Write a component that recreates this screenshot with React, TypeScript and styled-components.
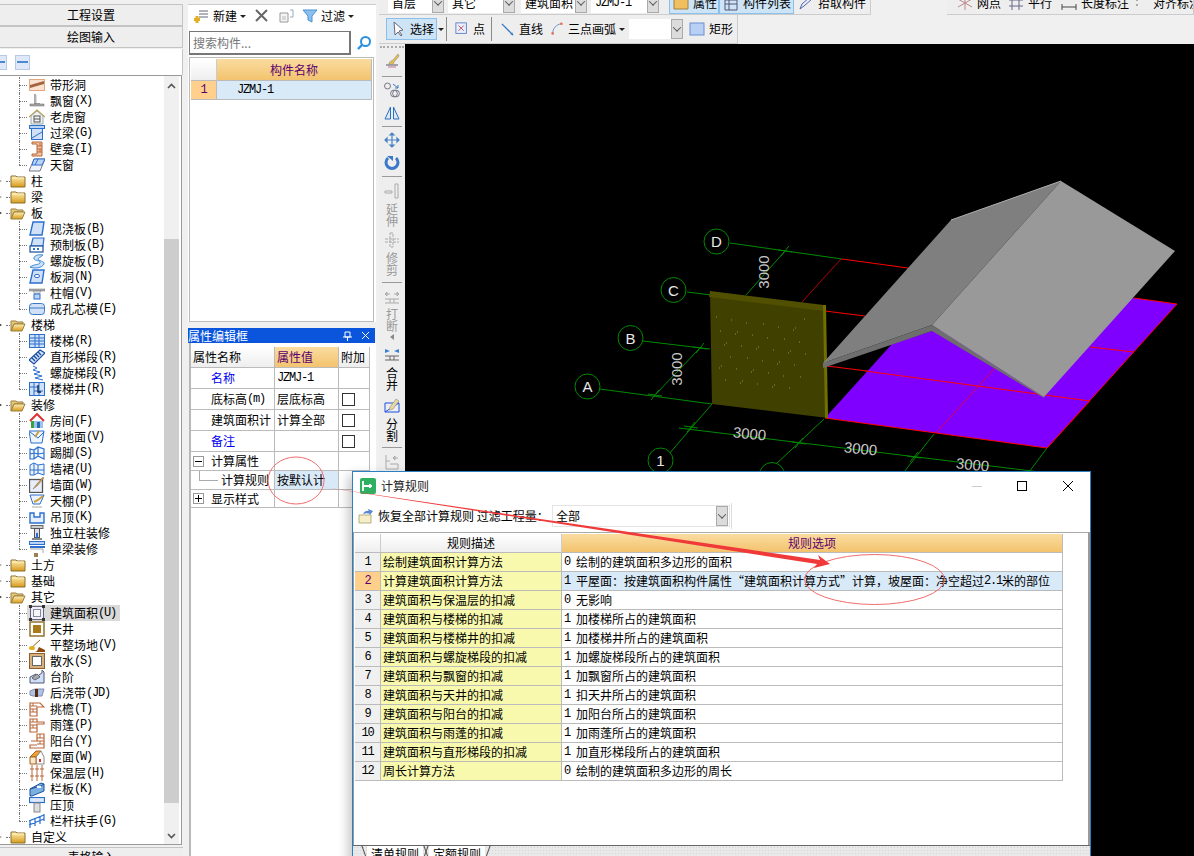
import React from 'react';
import styled, { createGlobalStyle } from 'styled-components';

const Global = createGlobalStyle`
  html, body { margin: 0; padding: 0; background: #f0f0f0; }
  body { font-family: "Noto Sans CJK SC", "Liberation Sans", sans-serif; font-size: 12px; color: #000; }
  * { box-sizing: border-box; }
`;

const Page = styled.div`
  position: relative; width: 1194px; height: 856px; overflow: hidden;
  display: flex; background: #f0f0f0; line-height: 14px;
`;
const Lat = styled.span`
  display: inline-block; line-height: 14px; height: 14px;
  font-family: "Liberation Mono", monospace; font-size: 12px; letter-spacing: -1.2px; white-space: pre;
`;
const Cjk = styled.span` display: inline-block; line-height: 14px; height: 14px; white-space: pre; `;
const T = ({ children }: { children: string }) => (
  <>
    {children.split(/([\x20-\x7e]+)/).filter(Boolean).map((p, i) =>
      /^[\x20-\x7e]+$/.test(p) ? <Lat key={i}>{p}</Lat> : <Cjk key={i}>{p}</Cjk>
    )}
  </>
);

/* ---------- left panel ---------- */
const Left = styled.aside`
  width: 183px; flex: none; display: flex; flex-direction: column; padding-top: 4px; height: 856px;
`;
const SideTab = styled.div<{ $gap?: number }>`
  height: 22px; flex: none; display: flex; align-items: center; justify-content: center;
  background: #eeeeee; border: 1px solid #c4c4c4; border-left: 0; margin-bottom: ${p => p.$gap ?? 0}px;
`;
const TreeTools = styled.div`
  height: 26px; flex: none; background: #fff; display: flex; align-items: center; gap: 8px;
  padding-left: 0; margin-left: -8px; border-right: 1px solid #c4c4c4;
`;
const MinusBtn = styled.span`
  width: 15px; height: 15px; background: #dfe8f8; border: 1px solid #b8c8e8; display: flex; align-items: center; justify-content: center;
  &::before { content: ""; width: 11px; height: 2px; background: #4a8ad0; }
`;
const TreeBox = styled.div`
  width: 182px; height: 770px; flex: none; background: #fff; border: 1px solid #999; border-left: 0;
  display: flex; position: relative;
`;
const TreeList = styled.div` flex: 1; padding-top: 1px; min-width: 0; overflow: hidden; `;
const Scroll = styled.div`
  width: 15px; margin: 0 2px 0 0; background: #f0f0f0; display: flex; flex-direction: column; align-items: center;
`;
const ScrollArrow = styled.div` height: 20px; display: flex; align-items: center; justify-content: center; flex: none; `;
const ScrollGap = styled.div<{ $h: number }>` height: ${p => p.$h}px; flex: none; `;
const Thumb = styled.div<{ $h: number }>` height: ${p => p.$h}px; width: 100%; background: #cdcdcd; flex: none; `;
const Row = styled.div` height: 16px; display: flex; align-items: center; white-space: nowrap; `;
const Exp = styled.span<{ $open: boolean }>`
  width: 10px; height: 16px; flex: none; position: relative;
  &::before { content: ""; position: absolute; left: -1px; top: 6px; width: 0; height: 0;
    border-left: 3px solid ${p => (p.$open ? '#444' : '#aaa')}; border-top: 2px solid transparent; border-bottom: 2px solid transparent; }
  &::after { content: ""; position: absolute; left: 6px; top: 8px; width: 4px; border-top: 1px dotted #777; }
`;
const Conn = styled.span<{ $last: boolean }>`
  width: 27px; height: 16px; flex: none; position: relative;
  &::before { content: ""; position: absolute; left: 19px; top: 0; height: ${p => (p.$last ? 8 : 16)}px; border-left: 1px dotted #777; }
  &::after { content: ""; position: absolute; left: 19px; top: 8px; width: 8px; border-top: 1px dotted #777; }
`;
const Item = styled.span<{ $sel?: boolean }>`
  display: inline-flex; align-items: center; height: 16px; gap: 5px; padding: 0 4px 0 2px;
  background: ${p => (p.$sel ? '#d9d9d9' : 'transparent')};
`;
const ItemLabel = styled.span` display: inline-flex; align-items: center; height: 14px; `;
const FolderItem = styled.span` display: inline-flex; align-items: center; height: 16px; gap: 5px; `;
const SideFoot = styled.div`
  height: 20px; margin-top: 2px; flex: none; text-align: center; background: #eee; border-top: 1px solid #c4c4c4; padding-top: 2px;
`;

const S = ({ children, s = 16 }: { children: React.ReactNode; s?: number }) => (
  <svg width={s} height={s} viewBox="0 0 16 16" fill="none" style={{ flex: 'none', display: 'block' }}>{children}</svg>
);
const B = '#2b6fd0', BL = '#cfe0f7', O = '#b9673a', OL = '#f2c6a4', G = '#777';

const Folder = ({ open }: { open: boolean }) => (
  <S>
    {open ? (
      <>
        <path d="M1 14V4h5l1 1h6v2H4L1 14z" fill="#e8c878" stroke="#9a8040" />
        <path d="M4 7h11l-3 7H1z" fill="url(#foldG)" stroke="#9a8040" />
      </>
    ) : (
      <>
        <path d="M1 3h5l1 1h8v10H1z" fill="url(#foldG)" stroke="#8a7030" />
        <path d="M2 5h12" stroke="#fff3c0" />
      </>
    )}
  </S>
);

const icons: Record<string, React.ReactNode> = {
  dai: <><rect x="0.5" y="2.5" width="15" height="11" fill="#f9e3d0" stroke="#e4a67e" /><path d="M1 8L15 4v3L1 11z" fill="#a5643d" /></>,
  piao: <><path d="M6 1v10h5" stroke="#555" /><path d="M7 2v8" stroke="#bbb" /><rect x="1" y="11" width="14" height="2" fill="#aaa" stroke="#666" strokeWidth=".5" /></>,
  laohu: <><path d="M0 8l8-7 8 7" stroke="#c8a040" strokeWidth="1.3" /><path d="M2 7l6-5 6 5v8H2z" fill="#f3f3f3" stroke="#9aa" /><rect x="5" y="7" width="6" height="6" stroke="#555" /><path d="M5 10h6" stroke="#555" /></>,
  guo: <><rect x="0.5" y="0.5" width="15" height="3" fill="#bcd4f4" stroke={B} /><rect x="2.5" y="3.5" width="11" height="11" fill={BL} stroke={B} /><path d="M3 13l10-6" stroke={B} /></>,
  bi: <><path d="M3 1h10v14H3v-2h5V3H3z" fill={OL} stroke={O} /><path d="M8 5h5M8 8h5M8 11h5M11 2v3M11 8v3" stroke={O} /></>,
  tc: <><path d="M5 2h11l-5 12H0z" fill="#eef2fa" stroke="#778" /><path d="M5 2h11l-3 6H3z" fill="#bcd4f4" stroke={B} /><path d="M9 2l-3 6" stroke={B} /></>,
  xj: <><path d="M4 1h11l-2 13H1z" fill={BL} stroke={B} strokeWidth="1.4" /></>,
  yz: <><path d="M4 1h11l-1 8H2z" fill={BL} stroke={B} strokeWidth="1.2" /><rect x="1" y="9" width="13" height="6" fill="#fff" stroke="#1a4ea0" strokeWidth="1.2" /><rect x="4" y="11" width="2" height="2" fill={B} /><rect x="8" y="11" width="2" height="2" fill={B} /></>,
  lx: <path d="M14 2C9 1 4 3 5 6c1 2 7 1 6 4-1 2-6 1-10 4 5 2 12 1 14-3 1-3-6-3-6-5 0-1 3-2 5-4z" fill={BL} stroke="#3a8ad8" />,
  bd: <><path d="M4 1h11l-2 13H1z" fill={BL} stroke={B} strokeWidth="1.4" /><ellipse cx="8" cy="7" rx="2.6" ry="1.6" fill="#fff" stroke={B} /></>,
  zm: <><path d="M0 4h16v2H0z" fill="#aaa" stroke={G} strokeWidth=".5" /><path d="M4 6h8l-2 3H6z" fill="#ddd" stroke={G} strokeWidth=".5" /><rect x="5" y="9" width="6" height="5" fill="#bcd4f4" stroke={B} /></>,
  cx: <><rect x="0.5" y="2.5" width="15" height="11" rx="3" fill={BL} stroke="#3a7ac0" /><path d="M1 7h14" stroke="#3a7ac0" /></>,
  lt: <><rect x="0.5" y="1.5" width="15" height="13" fill={BL} stroke={B} /><path d="M1 5h14M1 8h14M1 11h14M6 2v12M10 2v12" stroke={B} /></>,
  zx: <><path d="M0 11L11 1l5 3-11 11z" fill={BL} stroke="#1a4ea0" strokeWidth="1.2" /><path d="M3 9l3 3M5 7l3 3M7 5l3 3M9 3l3 3" stroke="#1a4ea0" strokeWidth="1.4" /></>,
  lxt: <path d="M4 1l4 2-4 2 7 2-6 2 8 2-7 2 8 2" stroke={B} />,
  ltj: <><rect x="0.5" y="1.5" width="15" height="13" fill={BL} stroke={B} /><path d="M5 2v12M10 2v12M1 6h9M5 10h9" stroke={B} /><path d="M9 4v7h3" stroke="#124" strokeWidth="1.3" /></>,
  fj: <><path d="M1 8l7-7 7 7" stroke="#d33" strokeWidth="2" /><rect x="2" y="8" width="3" height="7" fill="#3aa040" /><rect x="5" y="8" width="9" height="7" fill="#9cc4ee" /><rect x="8" y="9" width="3" height="6" fill="#2a6ab0" /></>,
  ldm: <><path d="M0 2h15l-2 12H2z" fill="#eef4fc" stroke={B} /><path d="M1 3l8 6M15 3l-6 6" stroke={B} /><path d="M6 8l4-6" stroke="#caa040" strokeWidth="2" /></>,
  tj: <path d="M1 14V4l4 1 4-3 6 2v10l-6-3-4 3zM1 9l4-1 4 1 6-1M9 2v9M5 5v9" fill={BL} fillOpacity=".3" stroke={B} strokeWidth="1.2" />,
  qq: <path d="M1 14V4l4-2 4 2 6-1v11l-6-2-4 2zM1 9h14M5 2v12M9 4v8" fill={BL} fillOpacity=".4" stroke={B} />,
  qm: <><rect x="0.5" y="2.5" width="13" height="13" fill="#e8eefa" stroke="#555" strokeWidth="1.3" /><path d="M4 12l4-3 7-8-1-1-7 8z" fill="#caa040" stroke="#866" strokeWidth=".5" /></>,
  tp: <><path d="M1 2h14l-4 9H4z" fill="#eef4fc" stroke={B} /><path d="M5 9l4-2 5-4" stroke="#caa040" strokeWidth="2" /><path d="M3 14h10" stroke="#aaa" /></>,
  dd: <path d="M1 4h4v4h6V4h4v10H1z" fill="#e8f0fc" stroke={B} strokeWidth="1.4" />,
  dlz: <><rect x="2" y="0.5" width="12" height="3" fill="#ccc" stroke="#666" /><rect x="5.5" y="3.5" width="5" height="9" fill="#dde" stroke="#555" /><path d="M8 8v5" stroke={B} strokeWidth="2" /><rect x="3" y="13" width="10" height="2" fill="#888" /></>,
  dl: <><rect x="0.5" y="0.5" width="15" height="3" fill="#bcd4f4" stroke={B} /><path d="M1 6h15" stroke={B} strokeWidth="2" /><path d="M1 8h13v4" stroke="#aaa" /><rect x="5" y="12" width="4" height="4" fill="#a08050" /></>,
  jz: <><rect x="1.5" y="1.5" width="13" height="13" fill="#eef" stroke="#667" /><rect x="4.5" y="4.5" width="7" height="7" fill="#f6f6f6" stroke="#889" /><rect x="0" y="0" width="3" height="3" fill="#333" /><rect x="13" y="0" width="3" height="3" fill="#333" /><rect x="0" y="13" width="3" height="3" fill="#333" /><rect x="13" y="13" width="3" height="3" fill="#333" /></>,
  tj2: <><rect x="1" y="1" width="14" height="14" fill="#fff" stroke="#8a6a20" strokeWidth="1.4" /><rect x="4" y="4" width="8" height="8" fill="#a87a18" /></>,
  pz: <><path d="M1 12l10-9" stroke="#8a6a20" /><ellipse cx="3" cy="11" rx="3" ry="2" fill="#e0b020" /><path d="M8 14l2-4 6 3v2H6z" fill="#8a4a10" /></>,
  ss: <><rect x="0.5" y="0.5" width="15" height="15" fill="#d8b080" stroke="#8a6030" /><rect x="3.5" y="3.5" width="9" height="9" fill="#fff" stroke="#666" /></>,
  tjie: <><path d="M1 8l6-3v3l6-4v-3l2 2v11H1z" fill={BL} stroke="#557" /><path d="M3 9l5-4 3 3-5 3z" fill="#aaa" stroke="#667" /></>,
  hj: <><path d="M1 6l5-2h9l-2 7H4L1 10z" fill="#a8c4e8" stroke="#88a" /><path d="M6 4h3v8H6z" fill="#5a2a10" /></>,
  ty: <><path d="M1 15V2h10l4 4H8v9z" fill="#fff" stroke={O} strokeWidth="1.2" /><path d="M1 5h7M1 8h7M1 11h7M4 2v3M4 8v3" stroke={O} /></>,
  yp: <><path d="M1 15V2h7v3h7v2H8v8z" fill="#fff" stroke={O} strokeWidth="1.2" /><path d="M1 5h7M1 8h7M1 11h7M4 2v3M4 8v3" stroke={O} /></>,
  yt: <><path d="M2 8h6V1h7v14H1v-3h7" fill="#fff" stroke={O} strokeWidth="1.2" /><path d="M8 5h7M8 8h7M8 11h7M11 1v4M11 8v3" stroke={O} /></>,
  wm: <><path d="M1 8l6-6h5l-5 6z" fill="#f0a030" stroke="#a86020" /><path d="M7 8l5-6 3 6v7H7z" fill="#fff" stroke="#888" /><path d="M1 8h6v7H1z" fill="#f6e8c8" stroke="#a86020" /><rect x="10" y="10" width="2" height="3" fill="#d33" /></>,
  bw: <path d="M3 0v16M8 0v16M13 0v16M1 4h4M6 4h4M11 4h4M1 11h4M6 11h4M11 11h4" stroke={O} />,
  lb: <><path d="M1 8l11-6 3 1v7L3 15H1z" fill="#7ab0e0" stroke="#1a4ea0" /><path d="M1 8l11-3 3-2" stroke="#1a4ea0" /><rect x="8" y="5" width="4" height="2" fill="#fff" /></>,
  yd: <><rect x="0.5" y="0.5" width="15" height="5" fill="#dde8f8" stroke={B} strokeWidth="1.2" /><rect x="5" y="6" width="6" height="9" fill="#ddd" stroke="#888" /></>,
  lg: <path d="M1 7v8M6 5v8M11 3v8M15 1v7M0 8l15-6M0 12l15-6" stroke={B} strokeWidth="1.2" />,
};

type Node = { f: boolean; open?: boolean; i?: string; t: string; last?: boolean; sel?: boolean };
const f = (t: string, open = false): Node => ({ f: true, t, open });
const c = (i: string, t: string, last = false, sel = false): Node => ({ f: false, i, t, last, sel });
const tree: Node[] = [
  c('dai', '带形洞'), c('piao', '飘窗(X)'), c('laohu', '老虎窗'), c('guo', '过梁(G)'), c('bi', '壁龛(I)'), c('tc', '天窗', true),
  f('柱'), f('梁'), f('板', true),
  c('xj', '现浇板(B)'), c('yz', '预制板(B)'), c('lx', '螺旋板(B)'), c('bd', '板洞(N)'), c('zm', '柱帽(V)'), c('cx', '成孔芯模(E)', true),
  f('楼梯', true),
  c('lt', '楼梯(R)'), c('zx', '直形梯段(R)'), c('lxt', '螺旋梯段(R)'), c('ltj', '楼梯井(R)', true),
  f('装修', true),
  c('fj', '房间(F)'), c('ldm', '楼地面(V)'), c('tj', '踢脚(S)'), c('qq', '墙裙(U)'), c('qm', '墙面(W)'), c('tp', '天棚(P)'), c('dd', '吊顶(K)'), c('dlz', '独立柱装修'), c('dl', '单梁装修', true),
  f('土方'), f('基础'), f('其它', true),
  c('jz', '建筑面积(U)', false, true), c('tj2', '天井'), c('pz', '平整场地(V)'), c('ss', '散水(S)'), c('tjie', '台阶'), c('hj', '后浇带(JD)'), c('ty', '挑檐(T)'), c('yp', '雨篷(P)'), c('yt', '阳台(Y)'), c('wm', '屋面(W)'), c('bw', '保温层(H)'), c('lb', '栏板(K)'), c('yd', '压顶'), c('lg', '栏杆扶手(G)', true),
  f('自定义'),
];

/* ---------- middle panel ---------- */
const Mid = styled.section`
  width: 188px; margin-left: 5px; flex: none; display: flex; flex-direction: column; height: 856px;
`;
const MidTop = styled.div` height: 318px; flex: none; background: #fff; border-top: 1px solid #ccc; margin-top: 4px; display: flex; flex-direction: column; `;
const MidBar = styled.div` height: 22px; display: flex; align-items: center; padding-left: 5px; flex: none; `;
const MidGap = styled.span<{ $w: number }>` width: ${p => p.$w}px; flex: none; `;
const Caret = styled.span`
  width: 0; height: 0; flex: none; border-top: 3px solid #222; border-left: 3px solid transparent; border-right: 3px solid transparent;
`;
const SearchRow = styled.div` display: flex; height: 25px; padding-left: 1px; align-items: center; flex: none; margin-top: 3px; `;
const SearchInput = styled.div`
  width: 162px; height: 24px; border: 1px solid #777; border-width: 1px 2px 2px 1px; color: #777; padding: 4px 0 0 3px; background: #fff;
`;
const SearchBtn = styled.div` margin-left: 5px; `;
const ListBox = styled.div`
  margin: 2px 0 0 1px; width: 185px; flex: 1; border: 1px solid #bbb; padding: 1px;
`;
const ListHead = styled.div` display: grid; grid-template-columns: 26px 155px; height: 22px; `;
const CornerCell = styled.div`
  background: linear-gradient(#fff, #eeeeee); border-right: 1px solid #ccc; border-bottom: 1px solid #bbb;
`;
const OrangeHead = styled.div`
  background: linear-gradient(#fadca0, #f3c36e); color: #5a0070; display: flex; align-items: center; justify-content: center;
  border-bottom: 1px solid #bbb; border-right: 1px solid #bbb;
`;
const ListRow = styled.div` display: grid; grid-template-columns: 26px 155px; height: 19px; `;
const ListNum = styled.div`
  background: #ffcf8c; color: #5a0070; border-right: 1px solid #bbb; border-bottom: 1px solid #bbb;
  display: flex; align-items: center; justify-content: center;
`;
const ListName = styled.div`
  background: #d8e9f8; padding-left: 20px; border-right: 1px solid #bbb; border-bottom: 1px solid #bbb; display: flex; align-items: center;
`;
const PanelTitle = styled.div`
  height: 15px; margin-top: 6px; flex: none; background: #0a55dc; color: #fff; display: flex; align-items: center;
  padding-left: 0; justify-content: space-between; width: 187px;
`;
const TitleBtns = styled.span` display: flex; gap: 9px; padding-right: 5px; align-items: center; `;
const PropPane = styled.div`
  flex: 1; background: #fff; border-left: 2px solid #b8b8b8; margin-left: 1px; padding-top: 4px;
`;
const PropGrid = styled.div`
  display: grid; grid-template-columns: 84px 64px 31px;
  grid-template-rows: 21px 21px 21px 21px 21px 19px 19px 18px;
  width: 179px;
`;
const PCell = styled.div<{ $head?: boolean; $orange?: boolean; $sel?: boolean; $blue?: boolean; $pad?: number }>`
  display: flex; align-items: center; white-space: nowrap; overflow: hidden; position: relative;
  border-right: 1px solid #bbb; border-bottom: 1px solid #bbb;
  padding-left: ${p => p.$pad ?? 2}px;
  color: ${p => (p.$orange ? '#5a0070' : p.$blue ? '#0000ee' : '#000')};
  background: ${p => p.$orange ? 'linear-gradient(#fadca0,#f3c36e)' : p.$head ? 'linear-gradient(#fff,#eee)' : p.$sel ? '#d8e9f8' : '#fff'};
`;
const Check = styled.span` width: 13px; height: 13px; border: 1px solid #333; margin-left: 1px; background: #fff; flex: none; `;
const PlusBox = styled.span<{ $minus?: boolean }>`
  width: 11px; height: 11px; border: 1px solid #999; flex: none; position: relative; margin-right: 7px; background: #fff;
  &::before { content: ""; position: absolute; left: 1px; right: 1px; top: 4px; height: 1px; background: #000; }
  &::after { content: ""; display: ${p => (p.$minus ? 'none' : 'block')}; position: absolute; top: 1px; bottom: 1px; left: 4px; width: 1px; background: #000; }
`;
const Elbow = styled.span`
  position: absolute; left: 8px; top: -1px; width: 19px; height: 11px; border-left: 1px solid #aaa; border-bottom: 1px solid #aaa;
`;

/* ---------- work area ---------- */
const Work = styled.main` flex: 1; min-width: 0; display: flex; flex-direction: column; margin-left: 3px; height: 856px; `;
const TopRow1 = styled.div` height: 15px; flex: none; display: flex; justify-content: space-between; overflow: hidden; `;
const Bar1 = styled.div<{ $w: number }>`
  width: ${p => p.$w}px; height: 15px; border-bottom: 1px solid #ccc; border-right: 1px solid #ccc; flex: none;
  display: flex; align-items: flex-start; overflow: hidden; background: #eeeeee;
`;
const Bar1Inner = styled.div` margin-top: -7px; height: 20px; display: flex; align-items: center; padding-left: 9px; white-space: nowrap; `;
const Combo = styled.span<{ $w: number; $ml?: number }>`
  width: ${p => p.$w}px; height: 20px; margin-left: ${p => p.$ml ?? 0}px; background: #fff; display: flex; align-items: center; flex: none;
  padding-left: 4px; position: relative;
`;
const ComboArrow = styled.span<{ $ml?: number }>`
  width: 12px; height: 20px; background: #dcdcdc; border: 1px solid #aaa; flex: none; display: flex; align-items: center; justify-content: center;
  margin-left: ${p => p.$ml ?? 0}px;
  &::before { content: ""; width: 5px; height: 5px; border-right: 1px solid #555; border-bottom: 1px solid #555; transform: rotate(45deg) translate(-1px,-1px); }
`;
const HiBtn = styled.span<{ $w: number; $ml?: number }>`
  width: ${p => p.$w}px; height: 22px; margin-left: ${p => p.$ml ?? 0}px; background: #cde4f7; border: 1px solid #8cc0ea; display: flex; align-items: center; gap: 4px;
  padding-left: 3px; flex: none;
`;
const ToolItem = styled.span<{ $ml?: number; $w?: number }>`
  display: inline-flex; align-items: center; gap: 4px; margin-left: ${p => p.$ml ?? 0}px; flex: none; ${p => p.$w ? `width: ${p.$w}px;` : ''}
`;
const Bar2 = styled.div`
  width: 359px; height: 29px; flex: none; border-bottom: 1px solid #ccc; border-right: 1px solid #ccc; background: #eeeeee;
  display: flex; align-items: center; padding-left: 7px; white-space: nowrap;
`;
const Sep = styled.span<{ $ml?: number }>` width: 1px; height: 24px; background: #8a8a8a; flex: none; margin-left: ${p => p.$ml ?? 0}px; `;
const WorkBody = styled.div` flex: 1; display: flex; min-height: 0; `;
const VBar = styled.div`
  width: 26px; flex: none; background: #eeeeee; display: flex; flex-direction: column; align-items: center; padding-top: 2px;
`;
const VGrip = styled.div` width: 24px; height: 3px; border-top: 2px dotted #aaa; flex: none; `;
const VSlot = styled.div<{ $h: number }>` height: ${p => p.$h}px; flex: none; display: flex; align-items: center; justify-content: center; `;
const VSepLine = styled.div<{ $h: number }>`
  height: ${p => p.$h}px; width: 20px; flex: none; display: flex; align-items: center;
  &::before { content: ""; width: 100%; height: 1px; background: #999; }
`;
const VText = styled.div<{ $h: number; $off?: boolean }>`
  height: ${p => p.$h}px; width: 14px; flex: none; text-align: center; line-height: 12px; color: ${p => (p.$off ? '#999' : '#000')};
`;
const Canvas = styled.div` flex: 1; background: #000; min-width: 0; `;
const CanvasSvg = styled.svg` display: block; width: 100%; height: 100%; `;

/* ---------- dialog ---------- */
const Dialog = styled.div`
  position: absolute; left: 352px; top: 471px; width: 739px; height: 400px; background: #fff;
  border: 1px solid #2d7fc4; display: flex; flex-direction: column; box-shadow: -8px 0 10px -4px rgba(0,0,0,.22);
`;
const DlgTitle = styled.div` height: 28px; flex: none; display: flex; align-items: center; padding-left: 7px; gap: 5px; `;
const DlgTitleText = styled.span` flex: 1; color: #222; `;
const WinBtns = styled.div` display: flex; align-items: center; margin-right: 16px; `;
const WinMin = styled.span` width: 10px; height: 1px; background: #ccc; `;
const WinMax = styled.span` width: 10px; height: 10px; border: 1px solid #000; margin-left: 35px; `;
const DlgTools = styled.div` height: 32px; flex: none; display: flex; align-items: center; padding-left: 5px; position: relative; `;
const DlgToolText = styled.span` margin-left: 4px; white-space: nowrap; width: 174px; `;
const DlgCombo = styled.div`
  width: 178px; height: 22px; border: 1px solid #e4e4e4; display: flex; align-items: center; justify-content: space-between; padding-left: 3px; padding-right: 1px;
`;
const DlgToolEnd = styled.span` width: 1px; height: 26px; background: #ddd; margin-left: 1px; `;
const GridPane = styled.div`
  height: 313px; flex: none; border-top: 1px solid #aaa; border-left: 1px solid #9a9a9a; border-right: 2px solid #9a9a9a; padding: 1px 0 0 1px; background: #fff;
`;
const GHead = styled.div` display: grid; grid-template-columns: 26px 181px 501px; height: 19px; `;
const GRow = styled.div` display: grid; grid-template-columns: 26px 181px 501px; height: 19px; white-space: nowrap; `;
const GNum = styled.div<{ $sel?: boolean }>`
  background: ${p => (p.$sel ? '#ffcf8c' : '#f0f0f0')}; color: ${p => (p.$sel ? '#5a0070' : '#000')};
  border-right: 1px solid #bbb; border-bottom: 1px solid #bbb; display: flex; align-items: center; justify-content: center;
`;
const GDesc = styled.div`
  background: #f8f9ac; border-right: 1px solid #bbb; border-bottom: 1px solid #bbb; padding-left: 2px; display: flex; align-items: center;
`;
const GOpt = styled.div<{ $sel?: boolean }>`
  background: ${p => (p.$sel ? '#d8e9f8' : '#fff')}; border-right: 1px solid #bbb; border-bottom: 1px solid #bbb; padding-left: 2px; display: flex; align-items: center;
`;
const GHeadPlain = styled.div`
  background: linear-gradient(#fff,#eee); border-right: 1px solid #ccc; border-bottom: 1px solid #bbb; display: flex; align-items: center; justify-content: center;
`;
const Foot = styled.div`
  flex: 1; border-top: 1px solid #666; background: #e9e9e9; display: flex; padding-left: 11px; align-items: flex-start; gap: 3px;
  background-image: radial-gradient(#d5d5d5 1px, transparent 1px); background-size: 3px 3px;
`;
const FootTab = styled.span`
  position: relative; height: 20px; padding: 0 4px; margin-left: 3px; background: #fff; line-height: 16px; white-space: nowrap; font-size: 12px;
  &::before { content: ""; position: absolute; left: -3px; top: -1px; height: 16px; border-left: 1px solid #555; transform: rotate(${'-'}20deg); }
  &::after { content: ""; position: absolute; right: -3px; top: -1px; height: 16px; border-left: 1px solid #555; transform: rotate(20deg); }
`;

const Overlay = styled.svg` position: absolute; left: 0; top: 0; width: 1194px; height: 856px; pointer-events: none; `;

const rules: [string, string][] = [
  ['绘制建筑面积计算方法', '0 绘制的建筑面积多边形的面积'],
  ['计算建筑面积计算方法', '1 平屋面：按建筑面积构件属性“建筑面积计算方式”计算，坡屋面：净空超过2.1米的部位'],
  ['建筑面积与保温层的扣减', '0 无影响'],
  ['建筑面积与楼梯的扣减', '1 加楼梯所占的建筑面积'],
  ['建筑面积与楼梯井的扣减', '1 加楼梯井所占的建筑面积'],
  ['建筑面积与螺旋梯段的扣减', '1 加螺旋梯段所占的建筑面积'],
  ['建筑面积与飘窗的扣减', '1 加飘窗所占的建筑面积'],
  ['建筑面积与天井的扣减', '1 扣天井所占的建筑面积'],
  ['建筑面积与阳台的扣减', '1 加阳台所占的建筑面积'],
  ['建筑面积与雨蓬的扣减', '1 加雨蓬所占的建筑面积'],
  ['建筑面积与直形梯段的扣减', '1 加直形梯段所占的建筑面积'],
  ['周长计算方法', '0 绘制的建筑面积多边形的周长'],
];

const GR = '#008a00', RD = '#ff0000';
const Bubble = ({ x, y, t }: { x: number; y: number; t: string }) => (
  <g>
    <circle cx={x} cy={y} r="12.5" fill="#000" stroke={GR} />
    <text x={x} y={y + 5.5} fill="#e8e8e8" fontSize="15" textAnchor="middle" fontFamily="Liberation Sans, sans-serif">{t}</text>
  </g>
);
const Tick = ({ x, y }: { x: number; y: number }) => (
  <path d={`M${x - 7} ${y - 1}l14 2M${x - 4} ${y + 5}l8-10`} stroke={GR} />
);
const Dim = ({ x, y, r = 6, v = false }: { x: number; y: number; r?: number; v?: boolean }) => (
  <text x={x} y={y} fill="#c8c8c8" fontSize="15" textAnchor="middle" fontFamily="Liberation Sans, sans-serif"
    transform={`rotate(${v ? -90 : r} ${x} ${y})`}>3000</text>
);

const wallDots: [number, number][] = [];
for (let i = 0; i < 45; i++) {
  wallDots.push([716 + ((i * 37) % 90), 316 + ((i * 53) % 72)]);
}

const vbar: ({ k: 'i'; h: number; n: React.ReactNode } | { k: 's'; h: number } | { k: 't'; h: number; t: string; off?: boolean })[] = [
  { k: 'i', h: 24, n: <S><path d="M2 12h12" stroke="#556" /><path d="M5 11c0-3 3-3 4-4l5-6 1 2-5 6c0 2-2 3-5 2z" fill="#e8c050" stroke="#887" strokeWidth=".6" /><path d="M4 14h8" stroke="#c070a0" /></S> },
  { k: 's', h: 6 },
  { k: 'i', h: 22, n: <S><circle cx="3.5" cy="4" r="3" stroke="#778" /><circle cx="10" cy="11.5" r="3.4" stroke="#778" /><circle cx="12" cy="11.5" r="3.4" stroke="#778" /><path d="M9 2l5 4M14 3v3h-3" stroke="#3a7ac0" /></S> },
  { k: 'i', h: 23, n: <S><path d="M1 14L6.5 2v12zM15 14L9.5 2v12z" fill="#dbe8f8" stroke="#2a70c0" /></S> },
  { k: 's', h: 5 },
  { k: 'i', h: 22, n: <S><path d="M8 1v14M1 8h14M8 1L6 3h4zM8 15l-2-2h4zM1 8l2-2v4zM15 8l-2-2v4z" stroke="#4a84c4" fill="#4a84c4" strokeWidth="1.2" /></S> },
  { k: 'i', h: 23, n: <S><path d="M4 3a6 6 0 1 0 8 0" stroke="#3a78c8" strokeWidth="3" /><path d="M3 1h6v5z" fill="#3a78c8" /></S> },
  { k: 's', h: 5 },
  { k: 'i', h: 24, n: <S><path d="M11 1v14M14 1v14M11 1h3M11 15h3M1 8h7M1 10h7M1 8v2M8 8v2" stroke="#aaa" /></S> },
  { k: 't', h: 24, t: '延伸', off: true },
  { k: 'i', h: 25, n: <S><path d="M6 1h3v14H6zM1 7h14M1 10h14" stroke="#aaa" strokeDasharray="3 1" /></S> },
  { k: 't', h: 24, t: '修剪', off: true },
  { k: 's', h: 12 },
  { k: 'i', h: 20, n: <S><path d="M1 4h5M15 4h-5M1 4l2-2v4zM15 4l-2-2v4z" stroke="#aaa" /><path d="M1 9h14M1 13h14M6 9v4M10 9v4" stroke="#aaa" /></S> },
  { k: 't', h: 25, t: '打断', off: true },
  { k: 'i', h: 8, n: <svg width="4" height="6"><path d="M4 0v6L0 3z" fill="#888" /></svg> },
  { k: 'i', h: 26, n: <S><path d="M1 3l5 2-5 2zM15 3l-5 2 5 2z" fill="#3a80d0" /><path d="M1 10h14M1 14h14M6 10v4M10 10v4" stroke="#666" /></S> },
  { k: 't', h: 24, t: '合并' },
  { k: 'i', h: 27, n: <S><path d="M1 6h14v9H1z" stroke="#1a4ee0" /><path d="M1 15L15 6" stroke="#1a4ee0" /><path d="M6 10l6-8 3 2-6 8-4 1z" fill="#e8d8a0" stroke="#888" strokeWidth=".6" /></S> },
  { k: 't', h: 24, t: '分割' },
  { k: 's', h: 10 },
  { k: 'i', h: 20, n: <S><path d="M2 1v14h12v-5H6M2 7h4M9 4h5M9 4l2-2v4z" stroke="#aaa" /></S> },
];

export default function App() {
  return (
    <Page>
      <Global />
      <svg width="0" height="0" style={{ position: 'absolute' }}>
        <defs>
          <linearGradient id="foldG" x1="0" y1="0" x2="0" y2="1">
            <stop offset="0" stopColor="#fff0b8" />
            <stop offset="1" stopColor="#d89a18" />
          </linearGradient>
        </defs>
      </svg>

      <Left>
        <SideTab>工程设置</SideTab>
        <SideTab $gap={1}>绘图输入</SideTab>
        <TreeTools><MinusBtn /><MinusBtn /></TreeTools>
        <TreeBox>
          <TreeList>
            {tree.map((n, i) => (
              <Row key={i}>
                {n.f ? (
                  <>
                    <Exp $open={!!n.open} />
                    <FolderItem><Folder open={!!n.open} /><ItemLabel><T>{n.t}</T></ItemLabel></FolderItem>
                  </>
                ) : (
                  <>
                    <Conn $last={!!n.last} />
                    <Item $sel={n.sel}><S>{icons[n.i as string]}</S><ItemLabel><T>{n.t}</T></ItemLabel></Item>
                  </>
                )}
              </Row>
            ))}
          </TreeList>
          <Scroll>
            <ScrollArrow><svg width="9" height="6"><path d="M1 5l3.5-3.5L8 5" stroke="#555" strokeWidth="1.6" fill="none" /></svg></ScrollArrow>
            <ScrollGap $h={143} />
            <Thumb $h={564} />
            <ScrollGap $h={23} />
            <ScrollArrow><svg width="9" height="6"><path d="M1 1l3.5 3.5L8 1" stroke="#555" strokeWidth="1.6" fill="none" /></svg></ScrollArrow>
          </Scroll>
        </TreeBox>
        <SideFoot>表格输入</SideFoot>
      </Left>

      <Mid>
        <MidTop>
          <MidBar>
            <S><path d="M6 3h9M6 6h9M6 9h9" stroke="#667" /><path d="M4 8v7M1 11.5h6" stroke="#e0b020" strokeWidth="3" /></S>
            <MidGap $w={4} /><span>新建</span><MidGap $w={3} /><Caret />
            <MidGap $w={8} />
            <S><path d="M2 2l11 11M13 2L2 13" stroke="#666" strokeWidth="2" /></S>
            <MidGap $w={8} />
            <S><path d="M2 5h8v9H2z" fill="#f5f5f5" stroke="#999" /><path d="M4 9h4M4 11h4" stroke="#bbb" /><path d="M12 2h3v7h-3" stroke="#9ab" /></S>
            <MidGap $w={8} />
            <S><path d="M1 2h14L10 8v6l-4-2V8z" fill="#8cc0f0" stroke="#4a90d0" /></S>
            <MidGap $w={3} /><span>过滤</span><MidGap $w={3} /><Caret />
          </MidBar>
          <SearchRow>
            <SearchInput>搜索构件...</SearchInput>
            <SearchBtn><S><circle cx="9.5" cy="6.5" r="4.5" stroke="#2a90e0" strokeWidth="2" /><path d="M6 10l-4 4" stroke="#2a90e0" strokeWidth="2.4" /></S></SearchBtn>
          </SearchRow>
          <ListBox>
            <ListHead><CornerCell /><OrangeHead>构件名称</OrangeHead></ListHead>
            <ListRow><ListNum><T>1</T></ListNum><ListName><T>JZMJ-1</T></ListName></ListRow>
          </ListBox>
        </MidTop>
        <PanelTitle>
          <span>属性编辑框</span>
          <TitleBtns>
            <svg width="9" height="10"><path d="M2 1h5v5H2zM0 6h9M4.5 6v4" stroke="#fff" fill="none" /></svg>
            <svg width="9" height="9"><path d="M1 1l7 7M8 1L1 8" stroke="#fff" /></svg>
          </TitleBtns>
        </PanelTitle>
        <PropPane>
          <PropGrid>
            <PCell $head>属性名称</PCell><PCell $orange>属性值</PCell><PCell $head>附加</PCell>
            <PCell $blue $pad={20}>名称</PCell><PCell><T>JZMJ-1</T></PCell><PCell />
            <PCell $pad={20}><T>底标高(m)</T></PCell><PCell>层底标高</PCell><PCell><Check /></PCell>
            <PCell $pad={20}>建筑面积计</PCell><PCell>计算全部</PCell><PCell><Check /></PCell>
            <PCell $blue $pad={20}>备注</PCell><PCell /><PCell><Check /></PCell>
            <PCell $pad={2}><PlusBox $minus />计算属性</PCell><PCell /><PCell />
            <PCell $pad={30}><Elbow />计算规则</PCell><PCell $sel>按默认计</PCell><PCell />
            <PCell $pad={2}><PlusBox />显示样式</PCell><PCell /><PCell />
          </PropGrid>
        </PropPane>
      </Mid>

      <Work>
        <TopRow1>
          <Bar1 $w={492}>
            <Bar1Inner>
              <Combo $w={44}>首层</Combo><ComboArrow />
              <Combo $w={55} $ml={4}>其它</Combo><ComboArrow />
              <Combo $w={54} $ml={6}>建筑面积</Combo><ComboArrow />
              <Combo $w={56} $ml={4}><T>JZMJ-1</T></Combo><ComboArrow />
              <HiBtn $w={50} $ml={10}><S><path d="M1 2h14v12H1z" fill="#f0c060" stroke="#a08040" /></S>属性</HiBtn>
              <HiBtn $w={75}><S><path d="M2 1h12v14H2zM6 1v14M2 5h12M2 9h12" stroke="#557" /></S>构件列表</HiBtn>
              <ToolItem $ml={4}><S><path d="M2 14l2-5 8-7 2 2-8 7z" fill="#e8eefc" stroke="#56a" /></S>拾取构件</ToolItem>
            </Bar1Inner>
          </Bar1>
          <Bar1 $w={247}>
            <Bar1Inner>
              <ToolItem $ml={1}><S><path d="M1 4l14 8M1 12L15 4M8 1v14" stroke="#b88" /></S>网点</ToolItem>
              <ToolItem $ml={7}><S><path d="M4 1v14M11 1v14M1 5h14M1 11h14" stroke="#668" /></S>平行</ToolItem>
              <ToolItem $ml={9}><S><path d="M1 9v6M15 9v6M1 12h14" stroke="#444" /><path d="M2 3h2M7 3h2M12 3h2" stroke="#3a3" strokeWidth="2" /></S>长度标注</ToolItem>
              <ToolItem $ml={4}><S><path d="M4 1v5M4 9v2" stroke="#666" /><path d="M12 2h2" stroke="#3a3" strokeWidth="2" /></S>对齐标注</ToolItem>
            </Bar1Inner>
          </Bar1>
        </TopRow1>
        <Bar2>
          <HiBtn $w={51}>
            <S><path d="M4 1l1 13 3-3 3 4 1-1-3-4 4-1z" fill="#fff" stroke="#667" /></S>
            选择
          </HiBtn>
          <ToolItem $ml={1}><Caret /></ToolItem>
          <Sep $ml={2} />
          <ToolItem $ml={8}><S s={14}><rect x="1" y="1" width="12" height="12" fill="#e8eefc" stroke="#5a7ac0" /><path d="M4 4l6 6M10 4l-6 6" stroke="#b04050" /></S>点</ToolItem>
          <Sep $ml={6} />
          <ToolItem $ml={8}><S s={15}><path d="M2 2l12 12" stroke="#3a78c0" strokeWidth="1.4" /><path d="M14 14l-1-3-2 2z" fill="#3a78c0" /></S>直线</ToolItem>
          <ToolItem $ml={7}><S s={14}><path d="M3 14C3 7 7 3 13 2" stroke="#5a8ac0" /><circle cx="3" cy="13" r="1.5" fill="#e07060" /><circle cx="13" cy="2" r="1.5" fill="#e07060" /></S>三点画弧</ToolItem>
          <ToolItem $ml={3}><Caret /></ToolItem>
          <Combo $w={42} $ml={4} />
          <ComboArrow />
          <ToolItem $ml={6}><S><rect x="1" y="2" width="14" height="12" fill="#b8d0f4" stroke="#6a90d0" /></S>矩形</ToolItem>
        </Bar2>
        <WorkBody>
          <VBar>
            <VGrip />
            {vbar.map((v, i) =>
              v.k === 'i' ? <VSlot key={i} $h={v.h}>{v.n}</VSlot>
                : v.k === 's' ? <VSepLine key={i} $h={v.h} />
                  : <VText key={i} $h={v.h} $off={v.off}>{v.t}</VText>
            )}
          </VBar>
          <Canvas>
            <CanvasSvg viewBox="405 44 789 812">
              {/* grid */}
              <path d="M730 243L842 259M687 292L711 295M643 341L710 349M600 389L712 404" stroke={GR} />
              <path d="M785 251L746 295M700 348L655 395M712 404L662 462M824 419L774 466M934 434L904 472M1047 448L1029 472M679 428L1040 472" stroke={GR} />
              <path d="M842 259L908 268M825 311L865 316M827 366L867 371" stroke={RD} />
              <path d="M841 259L802 302" stroke={RD} strokeWidth=".7" />
              <Tick x={785} y={251} /><Tick x={700} y={348} /><Tick x={655} y={395} />
              <Tick x={691} y={427} /><Tick x={799} y={443} /><Tick x={914} y={457} />
              <Bubble x={716.5} y={241.5} t="D" /><Bubble x={673.5} y={290} t="C" /><Bubble x={630.5} y={338} t="B" /><Bubble x={587.5} y={386.5} t="A" />
              <Bubble x={660.5} y={460.5} t="1" /><Bubble x={772} y={475} t="2" />
              <Dim x={769} y={272} v /><Dim x={682} y={369} v />
              <Dim x={749} y={439} /><Dim x={860} y={454} /><Dim x={972} y={470} />
              {/* slab */}
              <polygon points="1134,298 1177,304 1047,448 825,418 892,344 932,331" fill="#8000ff" />
              <path d="M1134 298L1177 304L1047 448L825 418" stroke={RD} fill="none" />
              <path d="M865 371L1090 401M1090 347L1134 352" stroke={RD} />
              <path d="M995 368L936 433M1090 401L1047 448" stroke={RD} strokeWidth=".7" />
              {/* wall */}
              <polygon points="710,292 824,306 828,418 712,404" fill="#404000" />
              <polygon points="710,291 824,305 824,311 709,297" fill="#505000" />
              <polygon points="823,305 826,305 828,418 825,418" fill="#707000" />
              {wallDots.map(([x, y], i) => <rect key={i} x={x} y={y} width="1" height="2" fill="#6a6a10" />)}
              {/* roof */}
              <polygon points="823,363 932,325 1044,397 1044,398 932,331 823,368" fill="#6e6e6e" />
              <polygon points="951,220 1061,181 932,325 823,363" fill="#7f7f7f" />
              <polygon points="1061,181 1175,251 1044,397 932,325" fill="#999999" />
              <path d="M951 220L1061 181" stroke="#b0b0b0" />
            </CanvasSvg>
          </Canvas>
        </WorkBody>
      </Work>

      <Dialog>
        <DlgTitle>
          <svg width="16" height="16" viewBox="0 0 16 16"><rect width="16" height="16" rx="2" fill="#2fb060" /><path d="M3 3v10M3 8h9M10 6v4" stroke="#fff" strokeWidth="1.8" fill="none" /></svg>
          <DlgTitleText>计算规则</DlgTitleText>
          <WinBtns>
            <WinMin />
            <WinMax />
            <svg width="12" height="12" style={{ marginLeft: 35 }}><path d="M1 1l10 10M11 1L1 11" stroke="#000" fill="none" /></svg>
          </WinBtns>
        </DlgTitle>
        <DlgTools>
          <S><path d="M1 7h12v8H1z" fill="#f5eec8" stroke="#b8b080" /><path d="M5 6c1-3 4-4 8-3l-1 3c-2-1-4-1-7 0z" fill="#5a88d0" /><path d="M10 1l5 2-3 4z" fill="#5a88d0" /></S>
          <DlgToolText>恢复全部计算规则 过滤工程量：</DlgToolText>
          <DlgCombo>全部<ComboArrow /></DlgCombo>
          <DlgToolEnd />
        </DlgTools>
        <GridPane>
          <GHead>
            <GHeadPlain /><GHeadPlain>规则描述</GHeadPlain><OrangeHead>规则选项</OrangeHead>
          </GHead>
          {rules.map(([d, o], i) => (
            <GRow key={i}>
              <GNum $sel={i === 1}><T>{String(i + 1)}</T></GNum>
              <GDesc>{d}</GDesc>
              <GOpt $sel={i === 1}><T>{o}</T></GOpt>
            </GRow>
          ))}
        </GridPane>
        <Foot>
          <FootTab>清单规则</FootTab>
          <FootTab>定额规则</FootTab>
        </Foot>
      </Dialog>

      <Overlay viewBox="0 0 1194 856">
        <ellipse cx="296" cy="480.5" rx="28" ry="23.5" fill="none" stroke="#f26d6d" />
        <ellipse cx="874.5" cy="579.5" rx="70" ry="25" fill="none" stroke="#f26d6d" />
        <polygon points="323,487 820,560 818,555 830,564 814,568 817,564" fill="#f03a3a" />
      </Overlay>
    </Page>
  );
}
